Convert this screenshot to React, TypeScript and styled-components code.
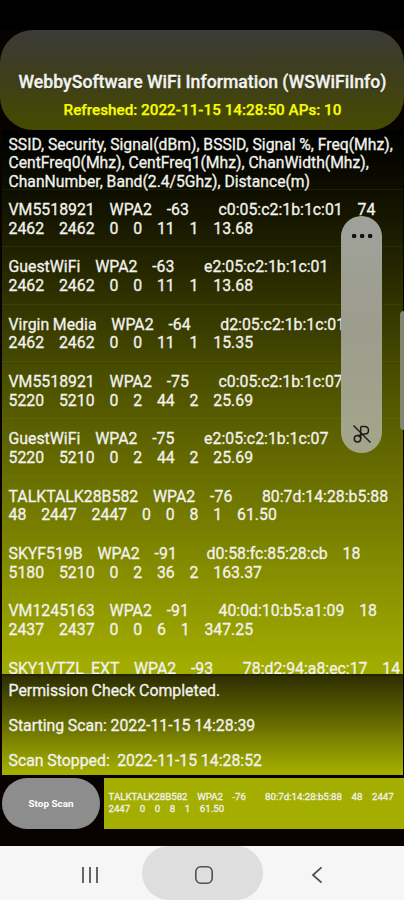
import React from "react";
import styled, { createGlobalStyle } from "styled-components";

const GlobalStyle = createGlobalStyle`
  html, body { margin: 0; background: #000; }
  * { box-sizing: border-box; }
`;

const Screen = styled.div`
  position: relative;
  width: 404px;
  height: 900px;
  overflow: hidden;
  display: flex;
  flex-direction: column;
  background: #080200;
  color: #f2f2ee;
  font-family: Roboto, sans-serif;
  font-size: 15.7px;
`;

const StatusBar = styled.div`
  height: 30px;
  flex: none;
  background: #000;
`;

const TitleCard = styled.header`
  height: 100px;
  flex: none;
  border-radius: 33px;
  background: linear-gradient(#3b3b39, #3e3e1c 45%, #474a00);
  display: flex;
  flex-direction: column;
  align-items: center;
  padding: 41px 0 0 1px;
`;

const Title = styled.h1`
  margin: 0;
  font-size: 17.65px;
  line-height: 22px;
  font-weight: 500;
  white-space: pre;
  -webkit-text-stroke: 0.35px currentColor;
  text-shadow: 0 1px 1px rgba(0, 0, 0, 0.5);
`;

const Subtitle = styled.div`
  margin-top: 7px;
  font-size: 15.28px;
  line-height: 20px;
  font-weight: 500;
  white-space: pre;
  color: #f8fc05;
  -webkit-text-stroke: 0.25px currentColor;
`;

const List = styled.section`
  flex: none;
  height: 544px;
  margin: 0 1px 0 2px;
  overflow: hidden;
  background: linear-gradient(#000 0%, #0b0b00 9%, #232400 24%, #4c5000 46%, #7b8200 75%, #a1ab00 98%);
`;

const Cell = styled.div<{ $header?: boolean }>`
  height: ${(p) => (p.$header ? 60 : 57.35)}px;
  padding: ${(p) => (p.$header ? 5.5 : 11)}px 0 0 6.5px;
  border-bottom: 1px solid rgba(150, 150, 60, 0.12);
`;

const Line = styled.div<{ $tight?: boolean }>`
  font-size: ${(p) => (p.$tight ? 15.85 : 15.7)}px;
  word-spacing: ${(p) => (p.$tight ? -0.22 : 0)}px;
  line-height: 18.5px;
  white-space: pre;
  -webkit-text-stroke: 0.3px currentColor;
`;

const Log = styled.section`
  flex: none;
  height: 101px;
  margin: 0 1px 0 2px;
  padding: 6px 0 0 6.5px;
  display: flex;
  flex-direction: column;
  gap: 16.3px;
  border-top: 2px solid #242400;
  background: linear-gradient(#2f2f00, #555900 35%, #808800 68%, #a4ae00 97%);
`;

const Footer = styled.div`
  flex: none;
  height: 71px;
  padding-top: 3px;
  display: flex;
  align-items: flex-start;
  gap: 4px;
`;

const ScanButton = styled.button`
  margin: 0 0 0 2px;
  width: 98px;
  height: 51px;
  border: 0;
  padding: 0;
  border-radius: 25px;
  background: #8d8d8d;
  color: #fff;
  font: 700 9.9px Roboto, sans-serif;
`;

const Ticker = styled.div`
  flex: 1;
  height: 51px;
  padding: 13px 0 0 4.5px;
  background: #a4ae00;
  font-size: 9.67px;
  line-height: 12px;
  white-space: pre;
  -webkit-text-stroke: 0.3px currentColor;
`;

const NavBar = styled.nav`
  flex: 1;
  display: flex;
  justify-content: center;
  background: #f6f6f6;
  svg { display: block; margin: 3px 0 0 3px; }
`;

const NavItem = styled.div<{ $pressed?: boolean }>`
  width: ${(p) => (p.$pressed ? 121 : 106)}px;
  height: 54px;
  border-radius: 27px;
  background: ${(p) => (p.$pressed ? "#dedede" : "transparent")};
  display: flex;
  align-items: center;
  justify-content: center;
`;

const SoundPill = styled.aside`
  position: absolute;
  left: 341px;
  top: 216px;
  width: 41px;
  height: 237px;
  border-radius: 20.5px;
  background: linear-gradient(#a0a19b, #9c9d8c 50%, #a4a68b);
  display: flex;
  flex-direction: column;
  align-items: center;
  justify-content: space-between;
  padding: 17px 0 9px;
`;

const EdgeHandle = styled.div`
  position: absolute;
  left: 400px;
  top: 311px;
  width: 8px;
  height: 119px;
  border-radius: 4px;
  background: #85866f;
`;

const networks = [
  ["VM5518921    WPA2    -63        c0:05:c2:1b:1c:01    74", "2462    2462    0    0    11    1    13.68"],
  ["GuestWiFi    WPA2    -63        e2:05:c2:1b:1c:01", "2462    2462    0    0    11    1    13.68"],
  ["Virgin Media    WPA2    -64        d2:05:c2:1b:1c:01", "2462    2462    0    0    11    1    15.35"],
  ["VM5518921    WPA2    -75        c0:05:c2:1b:1c:07", "5220    5210    0    2    44    2    25.69"],
  ["GuestWiFi    WPA2    -75        e2:05:c2:1b:1c:07", "5220    5210    0    2    44    2    25.69"],
  ["TALKTALK28B582    WPA2    -76        80:7d:14:28:b5:88", "48    2447    2447    0    0    8    1    61.50"],
  ["SKYF519B    WPA2    -91        d0:58:fc:85:28:cb    18", "5180    5210    0    2    36    2    163.37"],
  ["VM1245163    WPA2    -91        40:0d:10:b5:a1:09    18", "2437    2437    0    0    6    1    347.25"],
  ["SKY1VTZL_EXT    WPA2    -93        78:d2:94:a8:ec:17    14", ""],
];

export default function App() {
  return (
    <>
      <GlobalStyle />
      <Screen>
        <StatusBar />
        <TitleCard>
          <Title>WebbySoftware WiFi Information (WSWiFiInfo)</Title>
          <Subtitle>Refreshed: 2022-11-15 14:28:50 APs: 10</Subtitle>
        </TitleCard>
        <List>
          <Cell $header>
            <Line>SSID, Security, Signal(dBm), BSSID, Signal %, Freq(Mhz),</Line>
            <Line>CentFreq0(Mhz), CentFreq1(Mhz), ChanWidth(Mhz),</Line>
            <Line>ChanNumber, Band(2.4/5Ghz), Distance(m)</Line>
          </Cell>
          {networks.map(([top, bottom], i) => (
            <Cell key={i}>
              <Line $tight>{top}</Line>
              <Line $tight>{bottom}</Line>
            </Cell>
          ))}
        </List>
        <Log>
          <Line $tight>Permission Check Completed.</Line>
          <Line $tight>Starting Scan: 2022-11-15 14:28:39</Line>
          <Line $tight>Scan Stopped:  2022-11-15 14:28:52</Line>
        </Log>
        <Footer>
          <ScanButton>Stop Scan</ScanButton>
          <Ticker>{"TALKTALK28B582    WPA2    -76        80:7d:14:28:b5:88    48    2447\n2447    0    0    8    1    61.50"}</Ticker>
        </Footer>
        <NavBar>
          <NavItem>
            <svg width="18" height="18" viewBox="0 0 18 18" stroke="#555" strokeWidth="1.8">
              <path d="M2 1v16M9 1v16M16 1v16" />
            </svg>
          </NavItem>
          <NavItem $pressed>
            <svg width="20" height="20" viewBox="0 0 20 20" fill="none" stroke="#505050" strokeWidth="1.6">
              <rect x="1.8" y="1.8" width="16.4" height="16.4" rx="5" />
            </svg>
          </NavItem>
          <NavItem>
            <svg width="12" height="18" viewBox="0 0 12 18" fill="none" stroke="#505050" strokeWidth="1.8">
              <path d="M10.5 1.3 2 9l8.5 7.7" />
            </svg>
          </NavItem>
        </NavBar>
        <SoundPill>
          <svg width="22" height="6" viewBox="0 0 22 6" fill="#111">
            <rect x="1" y="1" width="4.2" height="4" rx="1.3" />
            <rect x="9" y="1" width="4.2" height="4" rx="1.3" />
            <rect x="17" y="1" width="4.2" height="4" rx="1.3" />
          </svg>
          <svg width="20" height="20" viewBox="0 0 20 20" fill="none" stroke="#1c1c16" strokeWidth="1.5">
            <circle cx="5.5" cy="14.8" r="3.2" />
            <path d="M8.7 15V3.5c0-.8.5-1 1.2-1h2.600c3 0 4 1.800 4 4 0 2.400-1.500 3.500-3.500 3.500-3 0-5 1.200-7.500 2" />
            <path d="M1.5 1.5 18.5 18.5" />
          </svg>
        </SoundPill>
        <EdgeHandle />
      </Screen>
    </>
  );
}
